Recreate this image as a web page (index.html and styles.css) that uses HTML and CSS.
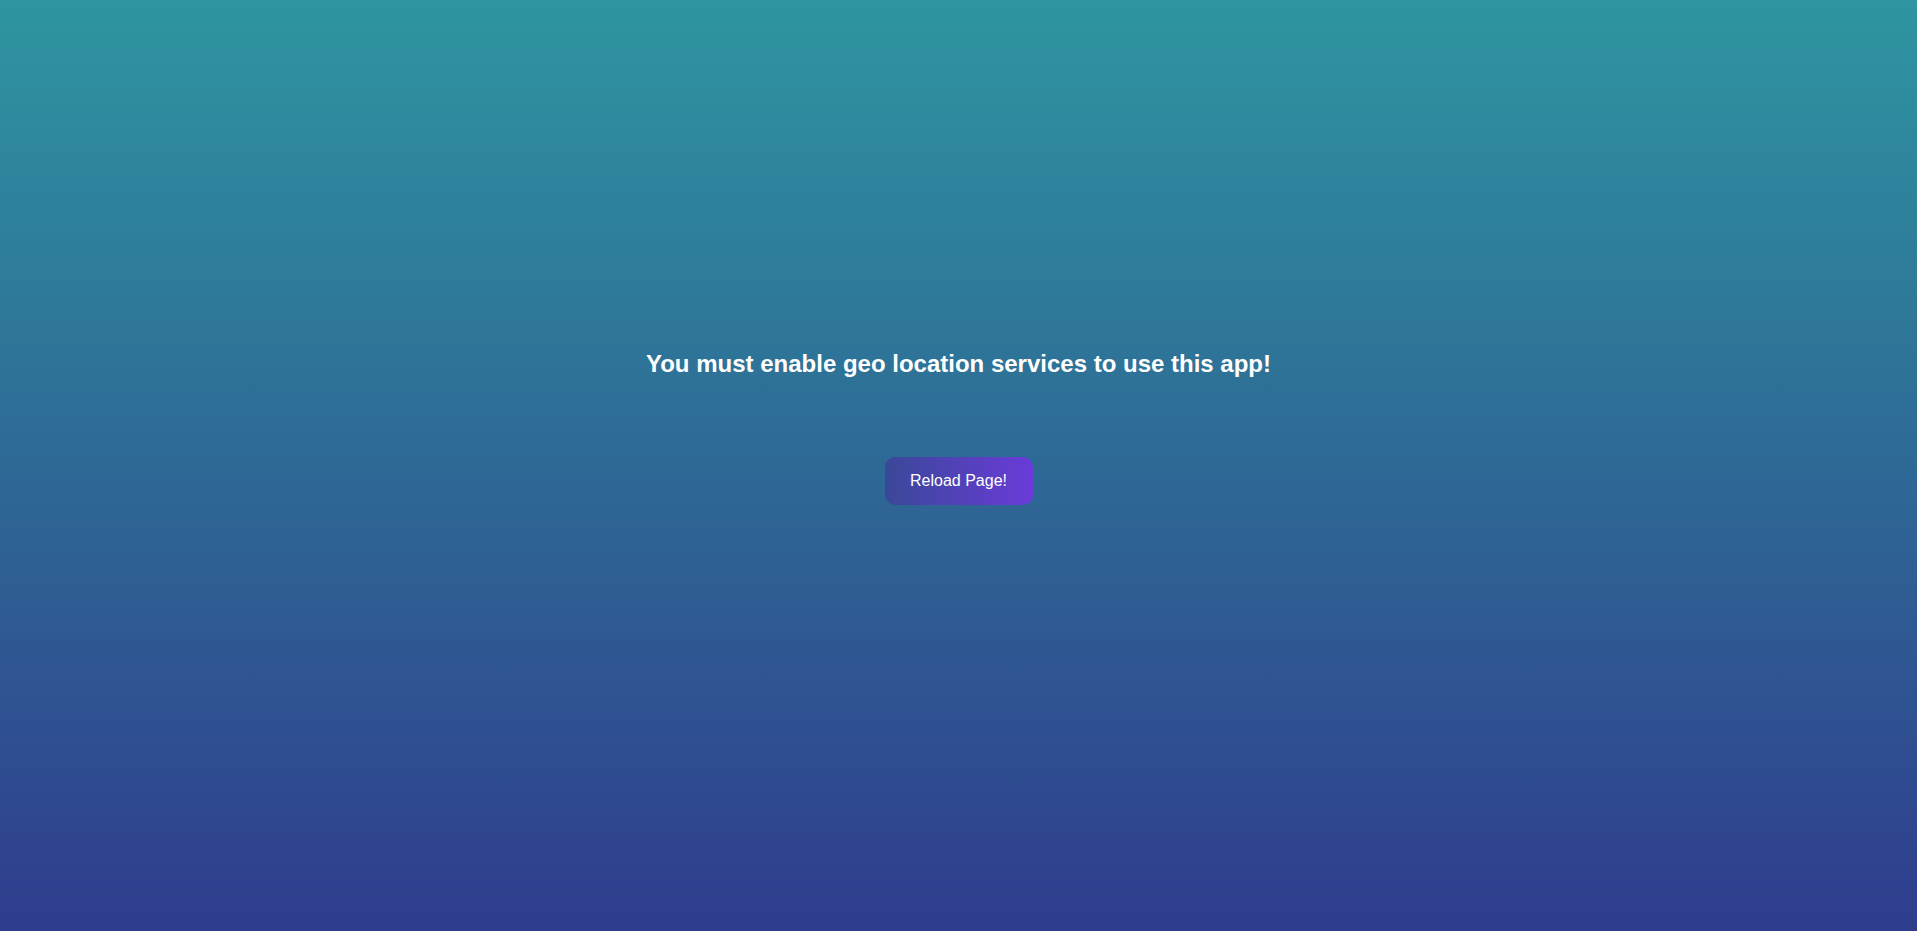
FILE: index.html
```html
<!DOCTYPE html>
<html lang="en">
<head>
<meta charset="utf-8">
<title>Geo location required</title>
<link rel="stylesheet" href="styles.css">
</head>
<body>
<main class="notice">
  <h2 class="notice-title">You must enable geo location services to use this app!</h2>
  <button class="reload-btn" type="button">Reload Page!</button>
</main>
</body>
</html>
```
FILE: styles.css
```css
html, body {
  margin: 0;
  padding: 0;
  height: 100%;
}
body {
  background: linear-gradient(to bottom, #2e95a1 0%, #2e7498 38%, #2f3c8d 100%);
  font-family: "Liberation Sans", Arial, sans-serif;
  color: #fff;
  overflow: hidden;
}
.notice {
  display: flex;
  flex-direction: column;
  align-items: center;
  padding-top: 350px;
  gap: 79px;
}
.notice-title {
  margin: 0;
  font-size: 24px;
  font-weight: bold;
  line-height: normal;
  color: #fff;
}
.reload-btn {
  width: 148px;
  height: 48px;
  border: none;
  border-radius: 10px;
  background: linear-gradient(to right, #3a4898 0%, #6a3bd9 100%);
  color: #fff;
  font-family: "Liberation Sans", Arial, sans-serif;
  font-size: 16px;
  cursor: pointer;
}
```
